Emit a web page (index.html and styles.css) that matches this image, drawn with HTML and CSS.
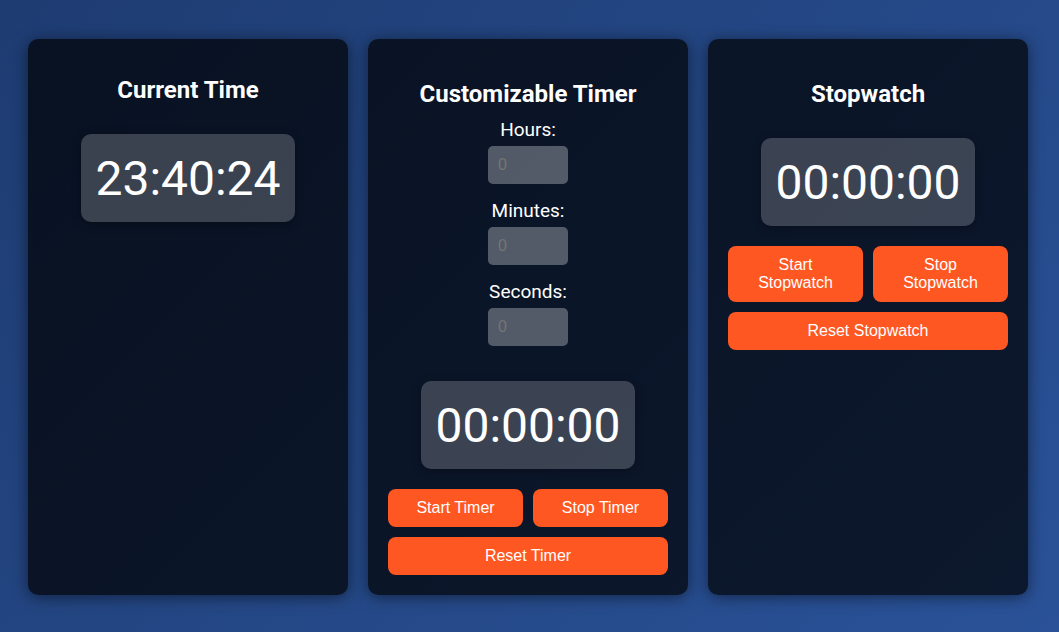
FILE: index.html
```html
<!DOCTYPE html>
<html lang="en">
<head>
<meta charset="utf-8">
<meta name="viewport" content="width=device-width, initial-scale=1">
<title>Clock, Timer and Stopwatch</title>
<link rel="stylesheet" href="styles.css">
</head>
<body>
<main class="cards">
  <section class="card card-clock">
    <h2 class="title">Current Time</h2>
    <div class="display">23:40:24</div>
  </section>

  <section class="card">
    <h2 class="title title-form">Customizable Timer</h2>
    <div class="fields">
      <div class="field">
        <label for="hours">Hours:</label>
        <input type="number" id="hours" min="0" placeholder="0">
      </div>
      <div class="field">
        <label for="minutes">Minutes:</label>
        <input type="number" id="minutes" min="0" max="59" placeholder="0">
      </div>
      <div class="field">
        <label for="seconds">Seconds:</label>
        <input type="number" id="seconds" min="0" max="59" placeholder="0">
      </div>
    </div>
    <div class="display">00:00:00</div>
    <div class="buttons">
      <button type="button">Start Timer</button>
      <button type="button">Stop Timer</button>
      <button type="button" class="wide">Reset Timer</button>
    </div>
  </section>

  <section class="card">
    <h2 class="title">Stopwatch</h2>
    <div class="display">00:00:00</div>
    <div class="buttons">
      <button type="button">Start Stopwatch</button>
      <button type="button">Stop Stopwatch</button>
      <button type="button" class="wide">Reset Stopwatch</button>
    </div>
  </section>
</main>
</body>
</html>
```

FILE: styles.css
```css
* {
  box-sizing: border-box;
}

body {
  margin: 0;
  min-height: 100vh;
  padding: 39px 31px 37px 28px;
  font-family: Roboto, "Liberation Sans", sans-serif;
  color: #fff;
  background: linear-gradient(135deg, #1e3c72, #2a5298);
}

.cards {
  display: grid;
  grid-template-columns: repeat(auto-fit, minmax(280px, 320px));
  justify-content: center;
  gap: 20px;
}

.card {
  display: flex;
  flex-direction: column;
  align-items: center;
  padding: 41px 20px 20px;
  border-radius: 10px;
  background: rgba(0, 0, 0, 0.7);
  box-shadow: 0 2px 15px rgba(0, 0, 0, 0.5);
  text-align: center;
}

.card-clock {
  padding-top: 37px;
}

.title {
  margin: 0 0 30px;
  font-size: 24px;
  line-height: 28px;
  font-weight: 700;
}

.title-form {
  margin-bottom: 10px;
}

.fields {
  display: flex;
  flex-direction: column;
  gap: 15px;
  margin-bottom: 35px;
}

.field {
  display: flex;
  flex-direction: column;
  align-items: center;
  gap: 5px;
}

.field label {
  font-size: 19px;
  line-height: 23px;
}

.field input {
  width: 80px;
  padding: 10px;
  border: 0;
  border-radius: 5px;
  font-family: "Liberation Sans", Arial, sans-serif;
  font-size: 16px;
  line-height: 18px;
  color: #fff;
  background: rgba(255, 255, 255, 0.3);
}

.field input::placeholder {
  color: #757575;
}

.display {
  padding: 16px 14px 14px;
  border-radius: 10px;
  font-size: 48px;
  line-height: 58px;
  background: rgba(255, 255, 255, 0.2);
  box-shadow: 0 2px 10px rgba(0, 0, 0, 0.3);
}

.buttons {
  display: grid;
  grid-template-columns: 1fr 1fr;
  gap: 10px;
  width: 100%;
  margin-top: 20px;
}

.buttons button {
  padding: 10px 20px;
  border: 0;
  border-radius: 8px;
  font-family: "Liberation Sans", Arial, sans-serif;
  font-size: 16px;
  line-height: 18px;
  color: #fff;
  background: #ff5722;
  cursor: pointer;
}

.buttons .wide {
  grid-column: 1 / -1;
}
```
